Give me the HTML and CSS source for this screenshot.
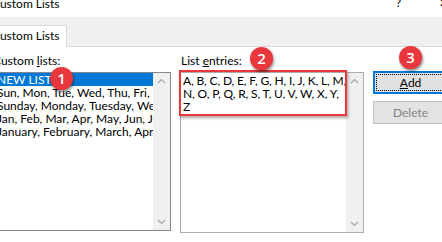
FILE: index.html
```html
<!DOCTYPE html>
<html>
<head>
<meta charset="utf-8">
<title>Custom Lists</title>
<link rel="stylesheet" href="styles.css">
</head>
<body>
<div class="dialog">
  <div class="titlebar">
    <span class="title">Custom Lists</span>
    <div class="caption-btns">
      <span class="cap">?</span>
      <span class="cap">✕</span>
    </div>
  </div>
  <div class="tabstrip">
    <div class="tab">Custom Lists</div>
    <div class="tabfill"></div>
  </div>
  <div class="panel">
    <div class="col col-lists">
      <div class="label">Custom <u>l</u>ists:</div>
      <div class="listbox lists">
        <div class="items">
          <div class="item selected">NEW LIST</div>
          <div class="item">Sun, Mon, Tue, Wed, Thu, Fri, Sat</div>
          <div class="item">Sunday, Monday, Tuesday, Wednesday, Thursday, Friday, Saturday</div>
          <div class="item">Jan, Feb, Mar, Apr, May, Jun, Jul, Aug, Sep, Oct, Nov, Dec</div>
          <div class="item">January, February, March, April, May, June, July, August, September, October, November, December</div>
        </div>
        <div class="scrollbar">
          <svg class="arrow" width="17" height="17" viewBox="0 0 17 17"><path d="M5 10 L8.5 6.5 L12 10" fill="none" stroke="#a6a6a6" stroke-width="1.2"/></svg>
          <svg class="arrow" width="17" height="17" viewBox="0 0 17 17"><path d="M5 7 L8.5 10.5 L12 7" fill="none" stroke="#a6a6a6" stroke-width="1.2"/></svg>
        </div>
      </div>
    </div>
    <div class="col col-entries">
      <div class="label">List <u>e</u>ntries:</div>
      <div class="listbox entries">
        <div class="entries-text">
          <div class="line">A, B, C, D, E, F, G, H, I, J, K, L, M,</div>
          <div class="line">N, O, P, Q, R, S, T, U, V, W, X, Y,</div>
          <div class="line">Z</div>
        </div>
        <div class="scrollbar">
          <svg class="arrow" width="17" height="17" viewBox="0 0 17 17"><path d="M5 10 L8.5 6.5 L12 10" fill="none" stroke="#a6a6a6" stroke-width="1.2"/></svg>
          <svg class="arrow" width="17" height="17" viewBox="0 0 17 17"><path d="M5 7 L8.5 10.5 L12 7" fill="none" stroke="#a6a6a6" stroke-width="1.2"/></svg>
        </div>
      </div>
    </div>
    <div class="col col-buttons">
      <div class="btn btn-add"><span class="focus"><u>A</u>dd</span></div>
      <div class="btn btn-delete">Delete</div>
    </div>
  </div>
  <div class="highlight"></div>
  <div class="badge badge-1">1</div>
  <div class="badge badge-2">2</div>
  <div class="badge badge-3">3</div>
</div>
</body>
</html>
```
FILE: styles.css
```css
html, body {
  margin: 0;
  padding: 0;
}
body {
  width: 442px;
  height: 242px;
  overflow: hidden;
  background: #ffffff;
  font-family: Lato, "Noto Sans", sans-serif;
  font-size: 12px;
  color: #000000;
}
.dialog {
  position: relative;
  width: 442px;
  height: 242px;
  overflow: hidden;
  background: #ffffff;
}
.titlebar {
  height: 17px;
  display: flex;
  align-items: flex-start;
}
.title {
  margin-left: -8px;
  margin-top: -5px;
  line-height: 17px;
  white-space: nowrap;
}
.caption-btns {
  margin-left: auto;
  margin-right: -24px;
  display: flex;
  margin-top: -6px;
}
.cap {
  width: 45px;
  text-align: center;
  line-height: 17px;
  font-size: 12px;
}
.tabstrip {
  height: 30px;
  background: #f0f0f0;
  display: flex;
  align-items: flex-end;
}
.tab {
  box-sizing: border-box;
  margin-left: -14px;
  width: 81px;
  height: 22px;
  padding-left: 6px;
  border-top: 1px solid #d9d9d9;
  border-right: 1px solid #d9d9d9;
  background: #ffffff;
  line-height: 19px;
  white-space: nowrap;
}
.tabfill {
  flex: 1;
  align-self: stretch;
  box-sizing: border-box;
  border-bottom: 1px solid #d9d9d9;
}
.panel {
  display: flex;
  padding-top: 6px;
}
.col-lists {
  margin-left: -5px;
  width: 176px;
}
.col-entries {
  margin-left: 9px;
  width: 185px;
}
.col-buttons {
  margin-left: 9px;
  width: 75px;
  padding-top: 18px;
  display: flex;
  flex-direction: column;
  gap: 7px;
}
.label {
  height: 15px;
  line-height: 15px;
  margin-bottom: 4px;
  white-space: nowrap;
}
.col-lists .label {
  margin-left: -2px;
}
.col-entries .label {
  margin-left: 1px;
}
.listbox {
  box-sizing: border-box;
  display: flex;
  background: #ffffff;
}
.lists {
  height: 159px;
  border: 1px solid #828790;
}
.entries {
  height: 161px;
  border: 1px solid #acacac;
}
.items {
  flex: 1;
  min-width: 0;
  overflow: hidden;
}
.item {
  height: 13px;
  line-height: 13px;
  padding-left: 1px;
  white-space: nowrap;
}
.item.selected {
  background: #0078d7;
  color: #ffffff;
}
.entries-text {
  flex: 1;
  min-width: 0;
  padding: 1px 0 0 2px;
  letter-spacing: -0.15px;
}
.line {
  height: 13px;
  line-height: 13px;
  white-space: nowrap;
}
.scrollbar {
  width: 17px;
  background: #f0f0f0;
  display: flex;
  flex-direction: column;
  justify-content: space-between;
}
.arrow {
  display: block;
}
.btn {
  box-sizing: border-box;
  width: 75px;
  height: 23px;
  display: flex;
  align-items: center;
  justify-content: center;
  white-space: nowrap;
}
.btn-add {
  border: 2px solid #0078d7;
  background: #e1e1e1;
  padding: 1px;
}
.btn-add .focus {
  box-sizing: border-box;
  width: 100%;
  height: 100%;
  border: 1px dotted #000000;
  display: flex;
  align-items: center;
  justify-content: center;
}
.btn-delete {
  border: 1px solid #bfbfbf;
  background: #e3e3e3;
  color: #838383;
}
.highlight {
  position: absolute;
  left: 179px;
  top: 70px;
  width: 168px;
  height: 46px;
  box-sizing: border-box;
  border: 2px solid #e8383d;
  box-shadow: 1px 2px 3px rgba(0, 0, 0, 0.35);
}
.badge {
  position: absolute;
  width: 23px;
  height: 23px;
  border-radius: 50%;
  background: #e8383d;
  color: #ffffff;
  font-family: "Open Sans", "Noto Sans", sans-serif;
  font-weight: 600;
  font-size: 15px;
  line-height: 23px;
  text-align: center;
  box-shadow: 1px 2px 3px rgba(0, 0, 0, 0.45);
}
.badge-1 {
  left: 50px;
  top: 67px;
}
.badge-2 {
  left: 250px;
  top: 47px;
}
.badge-3 {
  left: 399px;
  top: 46px;
}
```
